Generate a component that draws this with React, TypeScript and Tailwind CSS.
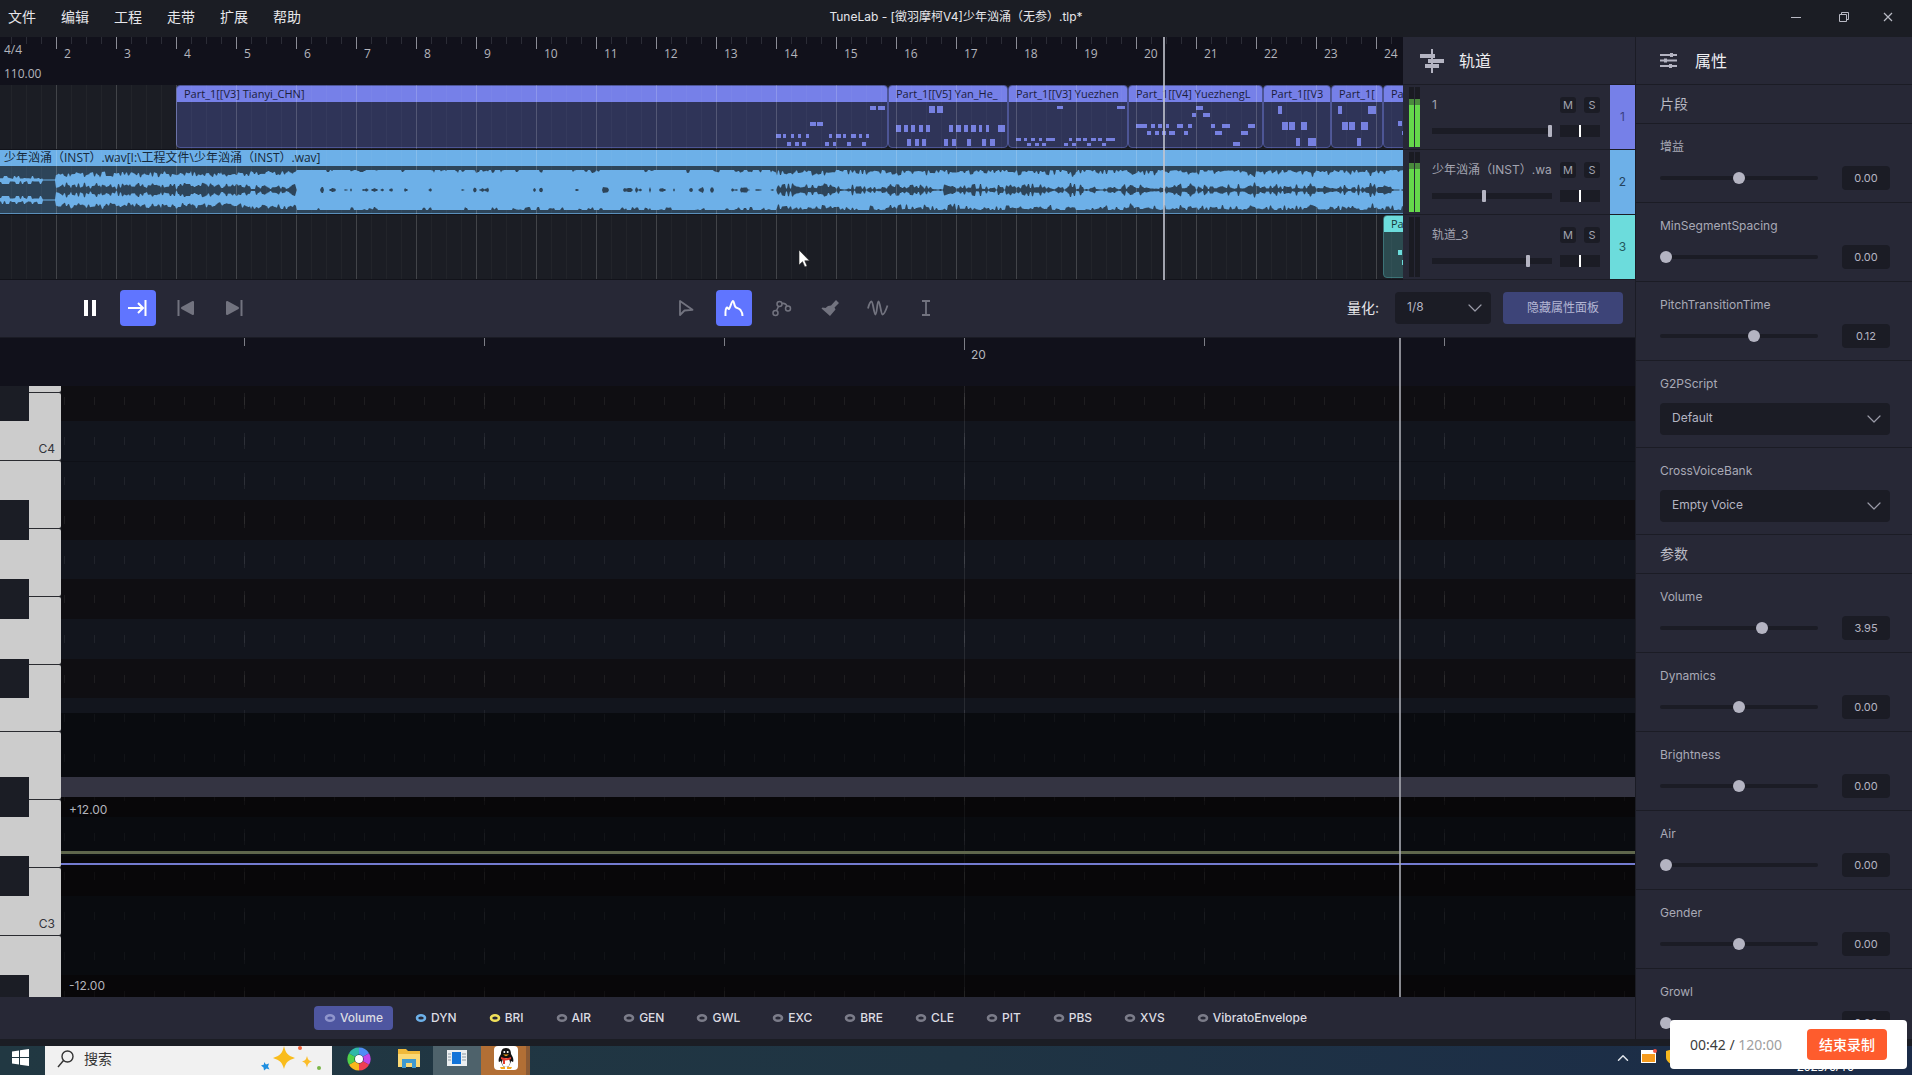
import type { ReactNode } from 'react'
import { ChevronDown, ChevronUp } from 'lucide-react'
import clsx from 'clsx'

const BAR = 60
const FIRST_BAR = 56

type Note = [x: number, y: number, w: number, h: number]

const row = (y: number, h: number, items: [number, number][]): Note[] =>
  items.map(([x, w]) => [x, y, w, h])

const parts = [
  { name: 'Part_1[[V3] Tianyi_CHN]', start: 176, end: 888 },
  { name: 'Part_1[[V5] Yan_He_', start: 888, end: 1008 },
  { name: 'Part_1[[V3] Yuezhen', start: 1008, end: 1128 },
  { name: 'Part_1[[V4] YuezhengL', start: 1128, end: 1263 },
  { name: 'Part_1[[V3', start: 1263, end: 1331 },
  { name: 'Part_1[', start: 1331, end: 1383 },
  { name: 'Pa', start: 1383, end: 1503 },
]

// y is relative to the top of the lane
const notes: Note[] = [
  ...row(49, 4, [[776, 5], [783, 3], [791, 3], [798, 3], [806, 3], [829, 3], [836, 5], [843, 3], [851, 5], [859, 3], [866, 3]]),
  ...row(57, 4, [[787, 4], [795, 4], [802, 4], [825, 4], [833, 3], [847, 4], [862, 4]]),
  ...row(37, 4, [[810, 6], [817, 6]]),
  ...row(21, 4, [[870, 6], [878, 7]]),
  ...row(40, 7, [[896, 5], [904, 4], [911, 4], [919, 4], [926, 4], [949, 4], [956, 5], [964, 4], [971, 5], [979, 3], [986, 3], [998, 7]]),
  ...row(54, 7, [[907, 4], [915, 4], [922, 4], [944, 4], [952, 4], [967, 4], [982, 4], [990, 5]]),
  ...row(21, 7, [[929, 6], [937, 6]]),
  ...row(53, 3, [[1016, 5], [1024, 3], [1031, 4], [1039, 3], [1046, 9], [1069, 3], [1076, 5], [1083, 4], [1091, 5], [1098, 4], [1106, 9]]),
  ...row(58, 3, [[1027, 4], [1035, 4], [1042, 4], [1064, 4], [1072, 4], [1087, 4], [1102, 4]]),
  ...row(21, 3, [[1057, 6], [1117, 8]]),
  ...row(39, 4, [[1136, 11], [1151, 4], [1158, 4], [1166, 3], [1177, 6], [1188, 4], [1211, 4], [1222, 8], [1248, 7]]),
  ...row(46, 4, [[1147, 4], [1155, 4], [1162, 4], [1169, 6], [1184, 4], [1215, 7], [1241, 7]]),
  ...row(28, 4, [[1192, 4], [1203, 7]]),
  ...row(21, 4, [[1196, 7]]),
  ...row(57, 4, [[1233, 7]]),
  ...row(21, 8, [[1278, 4], [1338, 4], [1368, 8]]),
  ...row(37, 8, [[1282, 6], [1289, 6], [1301, 6], [1342, 6], [1349, 6], [1361, 7]]),
  ...row(53, 8, [[1296, 4], [1308, 8], [1357, 4]]),
  ...row(36, 5, [[1398, 4]]),
  ...row(46, 4, [[1402, 6]]),
]

const tracks = [
  { id: 1, name: '1', volume: 100, level: 48, color: 'bg-[#7680e8]', ink: 'text-[#3b4082]' },
  { id: 2, name: '少年汹涌（INST）.wa', volume: 43, level: 49, color: 'bg-[#6db0e8]', ink: 'text-[#24425c]' },
  { id: 3, name: '轨道_3', volume: 81, level: 0, color: 'bg-[#6cdcdc]', ink: 'text-[#24585c]' },
]

const automations = [
  { name: 'Volume', eye: '#8f95cc', active: true },
  { name: 'DYN', eye: '#6db0e8' },
  { name: 'BRI', eye: '#f0e05a' },
  { name: 'AIR', eye: '#7b7c89' },
  { name: 'GEN', eye: '#7b7c89' },
  { name: 'GWL', eye: '#7b7c89' },
  { name: 'EXC', eye: '#7b7c89' },
  { name: 'BRE', eye: '#7b7c89' },
  { name: 'CLE', eye: '#7b7c89' },
  { name: 'PIT', eye: '#7b7c89' },
  { name: 'PBS', eye: '#7b7c89' },
  { name: 'XVS', eye: '#7b7c89' },
  { name: 'VibratoEnvelope', eye: '#7b7c89' },
]

const noise = (i: number) => {
  const v = Math.sin(i * 12.9898 + 4.1) * 43758.5453
  return v - Math.floor(v)
}

// Slow wobble between 0 and 1
const swell = (i: number, size: number) => {
  const k = Math.floor(i / size)
  const t = i / size - k
  return noise(k) * (1 - t) + noise(k + 1) * t
}

function amplitude(x: number, seed: number) {
  const n = noise(Math.floor(x / 2) + seed)
  if (x < 43) return n > 0.7 ? 4 : 1 + n * 2
  if (x < 56) return 0.5
  if (x < 297) {
    // quiet intro, every hit decays before the next one
    const hit = 1 - ((x - 56) % 15) / 22
    const body = x > 250 ? 5 : 3
    return Math.min(9, body + hit * 3 + (n - 0.4) * 5)
  }
  if (x < 777) return noise(Math.floor(x / 3) + seed) > 0.7 ? 10 - n * 3 : 10
  // drums open a wide gap just before each bar line
  const toBar = (x - FIRST_BAR + 8) % BAR
  const gap = toBar < 8 ? 3 : swell(x, 20) * 2
  return 10 - n * n * 5 - gap
}

function channelPath(center: number, seed: number, outerUp: boolean) {
  let top = ''
  let bottom = ''
  for (let x = 0; x <= 1920; x++) {
    const up = Math.min(10, amplitude(x, seed) + (outerUp && x > 777 ? 1 : 0))
    const down = Math.min(10, amplitude(x, seed + 37) + (!outerUp && x > 777 ? 1 : 0))
    top += `${x ? 'L' : 'M'}${x} ${(center - up).toFixed(1)}`
    bottom = `L${x} ${(center + down).toFixed(1)}` + bottom
  }
  return top + bottom + 'Z'
}

const channels = [
  { name: 'left', path: channelPath(30, 0, true) },
  { name: 'right', path: channelPath(50, 37, false) },
]

const range = (n: number) => Array.from({ length: n }, (_, i) => i)

function MenuBar() {
  return (
    <header className="grid h-[37px] shrink-0 grid-cols-[1fr_auto_1fr] items-center pb-1">
      <nav className="flex text-sm text-[#e6e6ea]">
        {['文件', '编辑', '工程', '走带', '扩展', '帮助'].map((item) => (
          <button key={item} className="w-[53px] pl-2 text-left whitespace-nowrap">
            {item}
          </button>
        ))}
      </nav>
      <h1 className="text-xs text-[#e6e6ea]">TuneLab - [徵羽摩柯V4]少年汹涌（无参）.tlp*</h1>
      <div className="flex justify-end">
        <button aria-label="最小化" className="grid w-12 place-items-center">
          <svg width="12" height="12" stroke="#b9bac4" fill="none">
            <path d="M1 6.500h10" />
          </svg>
        </button>
        <button aria-label="还原" className="grid w-12 place-items-center">
          <svg width="12" height="12" stroke="#b9bac4" fill="none">
            <path d="M1.500 3.500h7v7h-7zM3.500 3.500v-2h7v7h-2" />
          </svg>
        </button>
        <button aria-label="关闭" className="mr-1 grid w-10 place-items-center">
          <svg width="12" height="12" stroke="#b9bac4" strokeWidth="1.200" fill="none">
            <path d="M2 2l8 8M10 2l-8 8" />
          </svg>
        </button>
      </div>
    </header>
  )
}

function TimeRuler() {
  return (
    <div className="relative h-12 overflow-hidden bg-[#11111b] text-xs text-[#b4b5bd]">
      <svg className="absolute inset-0 h-full w-full">
        {range(130).map((i) => (
          <rect key={i} x={11 + i * 15} y="0" width="1" height="7" fill="#2b2c36" />
        ))}
        {range(23).map((i) => (
          <g key={i}>
            <rect x={FIRST_BAR + i * BAR} y="0" width="1" height="12" fill="#8b8c95" />
            <text x={FIRST_BAR + 8 + i * BAR} y="21" fill="currentColor">
              {i + 2}
            </text>
          </g>
        ))}
      </svg>
      <div className="relative flex flex-col gap-2 pt-[5px] pl-1 leading-4">
        <span>4/4</span>
        <span>110.00</span>
      </div>
    </div>
  )
}

function GridLines() {
  return (
    <svg className="pointer-events-none absolute inset-0 h-full w-full">
      {range(130).map((i) => (
        <rect key={i} x={11 + i * 15} y="0" width="1" height="64" fill="#fff" opacity="0.03" />
      ))}
      {range(32).map((i) => (
        <rect key={i} x={FIRST_BAR + i * BAR} y="0" width="1" height="64" fill="#fff" opacity="0.15" />
      ))}
    </svg>
  )
}

function Lane({ children }: { children: ReactNode }) {
  return (
    <div className="relative h-[65px] overflow-hidden border-b border-[#12131a] bg-[#1b1d24]">
      {children}
    </div>
  )
}

function Arrangement() {
  return (
    <section className="relative min-w-0 flex-1 overflow-hidden font-['Open_Sans','Noto_Sans_CJK_SC',sans-serif]">
      <TimeRuler />
      <Lane>
        {parts.map((part) => (
          <div
            key={part.start}
            className="absolute top-0 h-[63px] overflow-hidden rounded border border-[#4d5595] bg-[#2f3458]"
            style={{ left: part.start, width: part.end - part.start }}
          >
            <p className="h-4 overflow-hidden bg-[#7680e8] pl-[7px] text-[11px] leading-4 whitespace-nowrap text-[#1b1d3c]">
              {part.name}
            </p>
          </div>
        ))}
        <svg className="absolute inset-0 h-full w-full" fill="#7680e0">
          {notes.map(([x, y, w, h]) => (
            <rect key={`${x}-${y}`} x={x} y={y} width={w} height={h} />
          ))}
        </svg>
        <GridLines />
      </Lane>
      <Lane>
        <div className="h-[64px] border-b border-[#5a8fbb] bg-[#2d4459]">
          <p className="h-4 overflow-hidden bg-[#6db0e8] pl-1 text-xs leading-4 whitespace-nowrap text-[#16293a]">
            少年汹涌（INST）.wav[I:\工程文件\少年汹涌（INST）.wav]
          </p>
        </div>
        <GridLines />
        <svg className="absolute inset-0 h-full w-full" fill="#6db0e8">
          {channels.map((channel) => (
            <path key={channel.name} d={channel.path} />
          ))}
        </svg>
      </Lane>
      <Lane>
        <div className="absolute top-0 left-[1383px] h-[63px] w-[120px] overflow-hidden rounded border border-[#3c7377] bg-[#2c4b50]">
          <p className="h-4 bg-[#6cdcdc] pl-[7px] text-[11px] leading-4 text-[#173638]">Pa</p>
        </div>
        <svg className="absolute inset-0 h-full w-full" fill="#6cdcdc">
          <rect x="1398" y="35" width="4" height="5" />
          <rect x="1402" y="45" width="6" height="5" />
        </svg>
        <GridLines />
      </Lane>
      <div className="absolute top-0 left-[1163px] h-full w-[2px] bg-[#c3c6cf]/80" />
      <svg className="absolute top-[212px] left-[798px]" width="14" height="20">
        <path d="M1 1v15l3.500-3.300 2.300 5.300 2.300-1-2.300-5.200h4.700z" fill="#fff" stroke="#222" strokeWidth="0.600" />
      </svg>
    </section>
  )
}

function Meter({ level }: { level: number }) {
  return (
    <div className="flex w-[5px] flex-col justify-end bg-[#1a1b22]">
      {level > 0 && <div className="border-t-[6px] border-[#4a8a3c] bg-[#65d84b]" style={{ height: level }} />}
    </div>
  )
}

function TrackPanel() {
  return (
    <section className="w-[232px] shrink-0">
      <div className="flex h-12 items-center gap-[14px] border-b border-[#1b1c25] pl-4">
        <svg width="26" height="26" viewBox="0 0 26 26" fill="#b4b4c2">
          <rect x="12" y="1" width="2" height="24" />
          <rect x="1" y="6" width="15" height="4" />
          <rect x="9" y="11" width="16" height="4" />
          <rect x="6" y="16" width="14" height="4" />
        </svg>
        <h2 className="text-base text-[#eeeef2]">轨道</h2>
      </div>
      {tracks.map((track) => (
        <div key={track.id} className="flex h-[65px] border-b border-[#1b1c25]">
          <div className="flex gap-[1px] px-[6px] py-[2px]">
            <Meter level={track.level} />
            <Meter level={track.level} />
          </div>
          <div className="flex min-w-0 flex-1 flex-col gap-3 py-3 pl-[6px]">
            <div className="flex h-4 items-center gap-2">
              <span className="w-[120px] overflow-hidden text-xs leading-4 whitespace-nowrap text-[#a3a4b0]">
                {track.name}
              </span>
              {['M', 'S'].map((label) => (
                <button key={label} className="size-4 rounded-[3px] bg-[#1b1c25] text-[11px] leading-4 text-[#a3a4b0]">
                  {label}
                </button>
              ))}
            </div>
            <div className="flex items-center gap-2">
              <input
                type="range"
                aria-label={`${track.name} 音量`}
                defaultValue={track.volume}
                className="h-3 w-[120px] appearance-none bg-transparent [&::-webkit-slider-runnable-track]:h-[6px] [&::-webkit-slider-runnable-track]:bg-[#1b1c25] [&::-webkit-slider-thumb]:-mt-[3px] [&::-webkit-slider-thumb]:h-3 [&::-webkit-slider-thumb]:w-1 [&::-webkit-slider-thumb]:appearance-none [&::-webkit-slider-thumb]:rounded-[1px] [&::-webkit-slider-thumb]:bg-[#b4b4c2]"
              />
              <input
                type="range"
                aria-label={`${track.name} 声像`}
                defaultValue={50}
                className="h-3 w-10 appearance-none bg-[#1b1c25] [&::-webkit-slider-thumb]:h-3 [&::-webkit-slider-thumb]:w-[2px] [&::-webkit-slider-thumb]:appearance-none [&::-webkit-slider-thumb]:bg-white"
              />
            </div>
          </div>
          <div className={clsx('grid w-[25px] place-items-center text-xs', track.color, track.ink)}>{track.id}</div>
        </div>
      ))}
    </section>
  )
}

function ToolButton({ label, active, children }: { label: string; active?: boolean; children: ReactNode }) {
  return (
    <button
      aria-label={label}
      className={clsx('grid size-9 place-items-center rounded', active ? 'bg-[#6075ff] text-white' : 'text-[#72737f]')}
    >
      <svg width="24" height="24" viewBox="0 0 24 24" fill="none" stroke="currentColor" strokeWidth="1.500">
        {children}
      </svg>
    </button>
  )
}

function Toolbar() {
  return (
    <div className="grid h-[58px] shrink-0 grid-cols-[1fr_auto_1fr] items-center border-b border-[#1b1c25] pr-6 pb-[1px]">
      <div className="flex gap-3 pl-[72px]">
        <ToolButton label="暂停">
          <path d="M6 4h4v16H6zM14 4h4v16h-4z" fill="#fff" stroke="none" />
        </ToolButton>
        <ToolButton label="自动滚动" active>
          <path d="M2 12h15M12 7l5 5-5 5M19.500 4v16" strokeWidth="2" />
        </ToolButton>
        <ToolButton label="跳到开头">
          <path d="M4.500 4v16" strokeWidth="2" />
          <path d="M19 6v12l-11-6z" fill="currentColor" strokeWidth="2" strokeLinejoin="round" />
        </ToolButton>
        <ToolButton label="跳到结尾">
          <path d="M19.500 4v16" strokeWidth="2" />
          <path d="M5 6v12l11-6z" fill="currentColor" strokeWidth="2" strokeLinejoin="round" />
        </ToolButton>
      </div>
      <div className="flex gap-3">
        <ToolButton label="选择">
          <path d="M6 5v14l4.500-4.500 8-.700z" strokeLinejoin="round" strokeWidth="1.800" />
        </ToolButton>
        <ToolButton label="音高" active>
          <path
            d="M3.500 20c-.200-4 .300-8 1.500-8.500.800-.300 1.200 2 2 1.500C8.500 11.500 9.500 5 11 5c1.200 0 1 4.500 2.500 6 1.200 1.200 3.500 1.200 5 3 1.300 1.700 2 4 2 6"
            strokeWidth="2"
          />
        </ToolButton>
        <ToolButton label="锚点">
          <circle cx="5.500" cy="17" r="2.500" />
          <circle cx="9.500" cy="8" r="2.500" />
          <circle cx="18" cy="12.500" r="2.500" />
          <path d="M6.500 14.500l2-4M12 7.500c2.500-.500 4 .500 5 2.500" />
        </ToolButton>
        <ToolButton label="画笔">
          <path d="M18 4l3 3-4.500 4.500 1 2-5.500 6.500-8.500-7.500 1-1 3 .500L10 10l3-.500z" fill="currentColor" stroke="none" />
        </ToolButton>
        <ToolButton label="颤音">
          <path
            d="M2 12.500c1-4 2-7 3.500-7S8 18.500 9.500 18.500 11 5.500 12.500 5.500 15 18.500 16.500 18.500s3-3 5-9"
            strokeWidth="1.800"
          />
        </ToolButton>
        <ToolButton label="文本">
          <path d="M8 5h8M8 19h8M12 5v14" strokeWidth="1.800" />
        </ToolButton>
      </div>
      <div className="-mr-3 flex items-center justify-end">
        <label htmlFor="quantization" className="mr-4 text-sm text-[#e6e6ea]">
          量化:
        </label>
        <div className="w-24">
          <Dropdown id="quantization" options={['1/8', '1/16', '1/32']} />
        </div>
        <button className="ml-3 h-8 w-[120px] rounded bg-[#3d4478] text-xs text-[#b4b6d4]">隐藏属性面板</button>
      </div>
    </div>
  )
}

function Dropdown({ id, options }: { id: string; options: string[] }) {
  return (
    <div className="relative">
      <select
        id={id}
        className="h-8 w-full appearance-none rounded bg-[#1b1c25] pb-[2px] pl-3 text-xs text-[#b4b4c2]"
      >
        {options.map((option) => (
          <option key={option}>{option}</option>
        ))}
      </select>
      <ChevronDown
        size={24}
        strokeWidth={1.2}
        className="pointer-events-none absolute top-1 right-1 text-[#9a9ba8]"
      />
    </div>
  )
}

// One octave is 475px: 12 rows in the grid, 7 white keys on the keyboard
const rowTop = (i: number) => Math.round(35 + (i * 475) / 12)
const whiteTop = (i: number) => Math.round(75 + (i * 475) / 7)
const blackRows = [-1, 2, 4, 6, 9, 11, 14, 16]

function Keyboard() {
  return (
    <svg className="h-full w-[61px] shrink-0 bg-[#2a2b30]">
      {range(11).map((i) => (
        <rect key={i} x="-4" y={whiteTop(i - 2)} width="65" height={whiteTop(i - 1) - whiteTop(i - 2) - 1} rx="2" fill="#cccccc" />
      ))}
      {blackRows.map((i) => (
        <rect key={i} x="0" y={rowTop(i)} width="29" height={rowTop(i + 1) - rowTop(i)} fill="#1b1d25" />
      ))}
      <g fill="#33343b" fontSize="12" textAnchor="end">
        <text x="55" y="67">C4</text>
        <text x="55" y="542">C3</text>
      </g>
    </svg>
  )
}

const smallTicks = range(18)
  .flatMap((r) => range(80).map((c) => `M${3 + c * 30}.500 ${rowTop(r - 1) + 16}v8`))
  .join('')
const beatTicks = range(18)
  .flatMap((r) => range(10).map((c) => `M${183 + c * 240}.500 ${rowTop(r - 1) + 12}v16`))
  .join('')

function PianoGrid() {
  return (
    <div className="relative min-w-0 flex-1 overflow-hidden bg-[#12151d]">
      <svg className="absolute inset-0 h-full w-full">
        {blackRows.map((i) => (
          <rect key={i} x="0" y={rowTop(i)} width="100%" height={rowTop(i + 1) - rowTop(i)} fill="#0f0e12" />
        ))}
        <rect x="0" y={rowTop(1)} width="100%" height="1" fill="#0e1017" />
        <path d={smallTicks} stroke="#fff" opacity="0.060" />
        <path d={beatTicks} stroke="#fff" opacity="0.060" />
        <rect x="903" y="0" width="1" height="100%" fill="#fff" opacity="0.090" />
      </svg>
      <div className="absolute inset-x-0 bottom-0 text-xs text-[#b4b5bd]">
        <div className="h-16 bg-black/45" />
        <div className="h-5 bg-[#343442]" />
        <div className="relative flex h-[200px] flex-col justify-between bg-black/45 px-2 pt-[5px] pb-[3px]">
          <span className="leading-4">+12.00</span>
          <span className="leading-4">-12.00</span>
          <div className="absolute inset-x-0 top-[54px] h-[3px] bg-[#5f664c]" />
          <div className="absolute inset-x-0 top-[66px] h-[2px] bg-[#737bd0]" />
        </div>
      </div>
    </div>
  )
}

function PianoRoll() {
  return (
    <section className="relative flex min-h-0 flex-1 flex-col">
      <div className="relative h-12 shrink-0 overflow-hidden bg-[#11111b]">
        <svg className="absolute inset-0 h-full w-full">
          {range(8).map((i) => (
            <rect key={i} x={244 + i * 240} y="0" width="1" height={i === 3 ? 12 : 8} fill="#7d7e87" />
          ))}
          <text x="971" y="21" fontSize="12" fill="#b4b5bd">
            20
          </text>
        </svg>
      </div>
      <div className="flex min-h-0 flex-1">
        <Keyboard />
        <PianoGrid />
      </div>
      <div className="absolute top-0 left-[1399px] h-full w-[2px] bg-[#a9aab2]/80" />
    </section>
  )
}

function AutomationBar() {
  return (
    <div className="flex h-[42px] shrink-0 items-center justify-center gap-3 pr-1 pb-[1px]">
      {automations.map((item) => (
        <button
          key={item.name}
          className={clsx(
            'flex h-6 items-center gap-1 rounded px-[10px] text-xs font-medium text-[#dcdce2]',
            item.active && 'bg-[#4e56a0]',
          )}
        >
          <svg width="12" height="10" viewBox="0 0 12 10" fill="none" stroke={item.eye} strokeWidth="2.500">
            <ellipse cx="6" cy="5" rx="4" ry="2.800" />
          </svg>
          {item.name}
        </button>
      ))}
    </div>
  )
}

function SliderField({ label, value, position = 50 }: { label: string; value: string; position?: number }) {
  const id = `prop-${label}`
  return (
    <div className="flex shrink-0 flex-col gap-[9px] border-b border-[#1b1c25] pt-[13px] pr-[22px] pb-3 pl-6">
      <label htmlFor={id} className="h-5 text-xs leading-5 text-[#a9aab6]">
        {label}
      </label>
      <div className="flex items-center justify-between gap-6">
        <input
          id={id}
          type="range"
          defaultValue={position}
          className="h-3 min-w-0 flex-1 appearance-none bg-transparent [&::-webkit-slider-runnable-track]:h-1 [&::-webkit-slider-runnable-track]:rounded-full [&::-webkit-slider-runnable-track]:bg-[#1b1c25] [&::-webkit-slider-thumb]:-mt-1 [&::-webkit-slider-thumb]:size-3 [&::-webkit-slider-thumb]:appearance-none [&::-webkit-slider-thumb]:rounded-full [&::-webkit-slider-thumb]:bg-[#b4b4c2]"
        />
        <input
          aria-label={`${label} 数值`}
          defaultValue={value}
          className="h-6 w-12 rounded bg-[#1b1c25] text-center text-[11px] text-[#b4b4c2]"
        />
      </div>
    </div>
  )
}

function SelectField({ label, option }: { label: string; option: string }) {
  const id = `prop-${label}`
  return (
    <div className="flex shrink-0 flex-col gap-[9px] border-b border-[#1b1c25] pt-[13px] pr-[22px] pb-3 pl-6">
      <label htmlFor={id} className="h-5 text-xs leading-5 text-[#a9aab6]">
        {label}
      </label>
      <Dropdown id={id} options={[option]} />
    </div>
  )
}

function SectionTitle({ children }: { children: ReactNode }) {
  return (
    <h3 className="flex h-[39px] shrink-0 items-center border-b border-[#1b1c25] px-6 text-sm text-[#b9bac4]">
      {children}
    </h3>
  )
}

function PropertyPanel() {
  return (
    <aside className="flex w-[276px] shrink-0 flex-col overflow-hidden">
      <div className="flex h-12 shrink-0 items-center gap-[18px] border-b border-[#1b1c25] pl-6">
        <svg width="17" height="17" viewBox="0 0 17 17" fill="#b4b4c2">
          <path d="M0 2h17v2H0zM0 7.500h17v2H0zM0 13h17v2H0z" />
          <path d="M10 1h3v4h-3zM4 6.500h3v4H4zM9 12h3v4H9z" />
        </svg>
        <h2 className="text-base text-[#eeeef2]">属性</h2>
      </div>
      <SectionTitle>片段</SectionTitle>
      <SliderField label="增益" value="0.00" />
      <SliderField label="MinSegmentSpacing" value="0.00" position={0} />
      <SliderField label="PitchTransitionTime" value="0.12" position={60} />
      <SelectField label="G2PScript" option="Default" />
      <SelectField label="CrossVoiceBank" option="Empty Voice" />
      <SectionTitle>参数</SectionTitle>
      <SliderField label="Volume" value="3.95" position={66} />
      <SliderField label="Dynamics" value="0.00" />
      <SliderField label="Brightness" value="0.00" />
      <SliderField label="Air" value="0.00" position={0} />
      <SliderField label="Gender" value="0.00" />
      <SliderField label="Growl" value="0.00" position={0} />
    </aside>
  )
}

function Taskbar() {
  return (
    <footer className="flex h-[29px] shrink-0 items-start overflow-hidden bg-linear-to-r from-[#213842] via-[#1f3443] to-[#1b2b48] font-['Noto_Sans','Noto_Sans_CJK_SC',sans-serif]">
      <button aria-label="开始" className="grid h-6 w-[45px] shrink-0 justify-start pt-[3px] pl-3">
        <svg width="17" height="17" fill="#fff">
          <path d="M0 2.500L7 1.500V8H0zM8 1.300L17 0v8H8zM0 9h7v6.500L0 14.500zM8 9h9v8l-9-1.300z" />
        </svg>
      </button>
      <div className="flex h-full w-[287px] shrink-0 items-center bg-[#f1f1f1] pb-1 pl-3">
        <svg width="17" height="18" fill="none" stroke="#333" strokeWidth="1.400">
          <circle cx="10.500" cy="6.500" r="5.500" />
          <path d="M6.500 10.500L1 17" />
        </svg>
        <input
          aria-label="搜索"
          placeholder="搜索"
          className="ml-[10px] min-w-0 flex-1 bg-transparent text-sm text-[#333] placeholder:text-[#333]"
        />
        <svg className="mr-2 shrink-0" width="64" height="25" viewBox="0 0 64 25">
          <path d="M24 0c2 8 4 9.500 11 12-7 2.500-9 4-11 11-2-7-4-8.500-11-11 7-2.500 9-4 11-12z" fill="#f9bc1c" />
          <path d="M47 10c1 4 2 4.500 5 5.500-3 1-4 2-5 6-1-4-2-5-5-6 3-1 4-1.500 5-5.500z" fill="#fbbd2a" />
          <path d="M4 16l2 2.500 3-1-1 3 1.500 3-3-1-2.500 2-.500-3-2.500-2 3-1z" fill="#1f8fe0" />
          <circle cx="40" cy="2" r="2" fill="#f0623a" />
          <circle cx="59" cy="22" r="2" fill="#7ab648" />
        </svg>
      </div>
      <button aria-label="浏览器" className="grid h-full w-[53px] shrink-0 place-items-center pb-1">
        <svg width="24" height="24" viewBox="0 0 24 24" fill="none" strokeWidth="7">
          <path d="M12 4a8 8 0 0 1 7 4" stroke="#4f8df5" />
          <path d="M19 8a8 8 0 0 1 0 8" stroke="#c445e8" />
          <path d="M19 16a8 8 0 0 1-7 4" stroke="#ef3f52" />
          <path d="M12 20a8 8 0 0 1-7-4" stroke="#f9b81c" />
          <path d="M5 16a8 8 0 0 1 0-8" stroke="#4fd14a" />
          <path d="M5 8a8 8 0 0 1 7-4" stroke="#2fb8a8" />
          <circle cx="12" cy="12" r="4" fill="#fff" stroke="none" />
        </svg>
      </button>
      <button aria-label="文件资源管理器" className="grid h-full w-12 shrink-0 justify-items-center pt-[3px]">
        <svg width="22" height="19">
          <path d="M0 0h8l2 2h12v16H0z" fill="#f0b93a" />
          <path d="M0 5h22v13H0z" fill="#fbd975" />
          <path d="M4 19v-9h14v9h-4v-5H8v5z" fill="#3f9ad0" />
        </svg>
      </button>
      <button aria-label="TuneLab" className="grid h-full w-12 shrink-0 justify-items-center bg-[#4e626b] pt-1">
        <svg width="20" height="16">
          <rect width="20" height="16" fill="#eceff1" />
          <rect x="5" y="2" width="9" height="12" fill="#1273d8" />
          <path d="M1 4h3M1 7h3M1 10h3M15 4h4M15 7h4M15 10h4" stroke="#8b9aa3" />
        </svg>
      </button>
      <button
        aria-label="QQ"
        className="grid h-full w-[49px] shrink-0 justify-items-center bg-[#b26f35] shadow-[inset_-4px_0_#8a5a35]"
      >
        <svg width="24" height="24">
          <rect width="24" height="24" rx="4" fill="#fff" />
          <path d="M12 2c4 0 5 3 5 6 2 3 3 6 2 8-1 0-1-1-2-1-1 4-2 6-5 6s-4-2-5-6c-1 0-1 1-2 1-1-2 0-5 2-8 0-3 1-6 5-6z" fill="#111" />
          <ellipse cx="12" cy="16.500" rx="4" ry="4.500" fill="#fff" />
          <path d="M7 11c3 1.500 7 1.500 10 0v2c-2 1-4 1.500-6 1.500V18H9v-4l-2-1z" fill="#e23b30" />
          <path d="M9 8.500h6l-3 1.700z" fill="#f6a81c" />
          <circle cx="10.300" cy="6" r="1" fill="#fff" />
          <circle cx="13.700" cy="6" r="1" fill="#fff" />
          <path d="M6 21h5v2H7zM13 21h5l-1 2h-4z" fill="#f6a81c" />
        </svg>
      </button>
      <div className="ml-auto flex w-[298px] shrink-0 items-start gap-[9px] pt-[3px]">
        <ChevronUp size={18} className="text-[#dfe4ea]" />
        <svg width="16" height="15">
          <path d="M0 1h15v13H0z" fill="#fff" />
          <path d="M1 5h13v8H1z" fill="#f59b1e" />
          <circle cx="14" cy="2" r="2" fill="#ee5544" />
        </svg>
        <svg width="14" height="16">
          <path d="M7 0l7 2v6c0 4-3 6-7 8-4-2-7-4-7-8V2z" fill="#f6b81e" />
        </svg>
        <time className="mt-[10px] ml-[108px] text-xs leading-4 text-white">2025/6/16</time>
      </div>
    </footer>
  )
}

function RecorderPopup() {
  return (
    <div className="absolute right-[5px] bottom-[6px] flex h-[49px] w-[237px] items-center justify-between rounded-sm bg-white pr-5 pl-5 font-['Noto_Sans','Noto_Sans_CJK_SC',sans-serif] text-sm">
      <span className="whitespace-nowrap text-[#3c3c3c]">
        00:42 / <span className="text-[#a0a0a0]">120:00</span>
      </span>
      <button className="h-[31px] w-20 rounded bg-[#fe5c2d] font-medium text-white">结束录制</button>
    </div>
  )
}

export default function App() {
  return (
    <div className="relative flex h-screen flex-col overflow-hidden bg-[#1b1d24] font-['Inter','Noto_Sans_CJK_SC',sans-serif]">
      <MenuBar />
      <main className="flex min-h-0 flex-1 bg-[#272836]">
        <div className="flex min-w-0 flex-1 flex-col border-r border-[#1b1c25]">
          <div className="flex shrink-0">
            <Arrangement />
            <TrackPanel />
          </div>
          <Toolbar />
          <PianoRoll />
          <AutomationBar />
        </div>
        <PropertyPanel />
      </main>
      <div className="h-[7px] shrink-0" />
      <Taskbar />
      <RecorderPopup />
    </div>
  )
}
